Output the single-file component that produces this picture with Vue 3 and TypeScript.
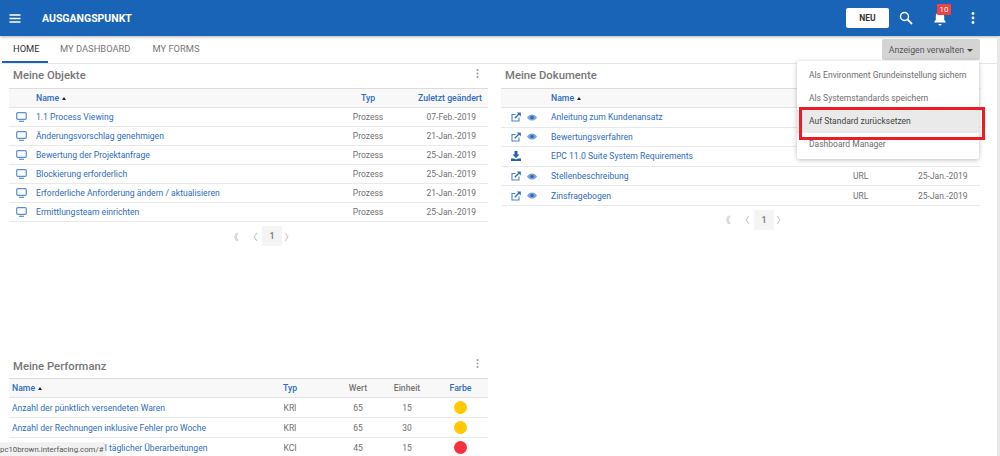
<script setup lang="ts">
const objekte = [
  ['1.1 Process Viewing', 'Prozess', '07-Feb.-2019'],
  ['Änderungsvorschlag genehmigen', 'Prozess', '21-Jan.-2019'],
  ['Bewertung der Projektanfrage', 'Prozess', '25-Jan.-2019'],
  ['Blockierung erforderlich', 'Prozess', '25-Jan.-2019'],
  ['Erforderliche Anforderung ändern / aktualisieren', 'Prozess', '21-Jan.-2019'],
  ['Ermittlungsteam einrichten', 'Prozess', '25-Jan.-2019'],
]
const dokumente = [
  { name: 'Anleitung zum Kundenansatz', typ: 'URL', date: '25-Jan.-2019', dl: false },
  { name: 'Bewertungsverfahren', typ: 'URL', date: '25-Jan.-2019', dl: false },
  { name: 'EPC 11.0 Suite System Requirements', typ: 'Datei', date: '22-Jan.-2019', dl: true },
  { name: 'Stellenbeschreibung', typ: 'URL', date: '25-Jan.-2019', dl: false },
  { name: 'Zinsfragebogen', typ: 'URL', date: '25-Jan.-2019', dl: false },
]
const perf = [
  ['Anzahl der pünktlich versendeten Waren', 'KRI', '65', '15', '#ffc800'],
  ['Anzahl der Rechnungen inklusive Fehler pro Woche', 'KRI', '65', '30', '#ffc800'],
  ['Anzahl der Projektanzahl täglicher Überarbeitungen', 'KCI', '45', '15', '#f73139'],
]
const menu = ['Als Environment Grundeinstellung sichern', 'Als Systemstandards speichern', 'Auf Standard zurücksetzen', 'Dashboard Manager']
</script>

<template>
  <div class="page">
    <header class="top">
      <svg class="burger" width="12" height="9" viewBox="0 0 12 9"><path d="M0.500 1h11M0.500 4.500h11M0.500 8h11" stroke="#fff" stroke-width="1.300" /></svg>
      <div class="brand">AUSGANGSPUNKT</div>
      <button class="neu">NEU</button>
      <svg class="search" width="14" height="14" viewBox="0 0 14 14"><circle cx="5.500" cy="5.500" r="4" fill="none" stroke="#fff" stroke-width="1.500" /><path d="M8.500 8.500l4.500 4.500" stroke="#fff" stroke-width="1.800" /></svg>
      <div class="bell">
        <svg width="14" height="16" viewBox="0 0 14 16"><path d="M7 1.200c.7 0 1.100.4 1.100 1 2 .5 3.100 2.200 3.100 4.300v3.600l1.500 1.700v.7H1.300v-.7l1.500-1.700V6.500c0-2.100 1.100-3.800 3.100-4.300 0-.6.400-1 1.100-1zM5.400 14h3.200c0 .9-.7 1.500-1.600 1.500S5.400 14.900 5.400 14z" fill="#fff" /></svg>
        <span class="badge">10</span>
      </div>
      <svg class="kebab" width="4" height="12" viewBox="0 0 4 12"><circle cx="2" cy="1.500" r="1.400" fill="#fff" /><circle cx="2" cy="6" r="1.400" fill="#fff" /><circle cx="2" cy="10.500" r="1.400" fill="#fff" /></svg>
    </header>

    <nav class="tabs">
      <a class="tab active">HOME</a>
      <a class="tab">MY DASHBOARD</a>
      <a class="tab">MY FORMS</a>
      <button class="manage">Anzeigen verwalten <i class="caret"></i></button>
    </nav>

    <main class="grid">
      <section class="panel">
        <div class="title">Meine Objekte
          <svg class="dots" width="3" height="9" viewBox="0 0 3 9"><circle cx="1.500" cy="1" r="1" /><circle cx="1.500" cy="4.500" r="1" /><circle cx="1.500" cy="8" r="1" /></svg>
        </div>
        <div class="row head obj">
          <span></span><span class="link b">Name <i class="up"></i></span><span class="c link b">Typ</span><span class="e link b">Zuletzt geändert</span>
        </div>
        <div v-for="r in objekte" :key="r[0]" class="row obj">
          <svg class="ic" width="11" height="10" viewBox="0 0 11 10"><rect x="0.700" y="0.700" width="9.600" height="6.600" rx="1" fill="none" stroke="#5b8ed0" stroke-width="1.200" /><path d="M3 9.300h5" stroke="#5b8ed0" stroke-width="1.200" /></svg>
          <span class="link">{{ r[0] }}</span><span class="c sm">{{ r[1] }}</span><span class="e2 sm">{{ r[2] }}</span>
        </div>
        <div class="pager"><span>《</span><span class="p2">〈</span><b>1</b><span>〉</span></div>
      </section>

      <section class="panel right">
        <div class="title">Meine Dokumente</div>
        <div class="row head doc">
          <span></span><span class="link b">Name <i class="up"></i></span><span class="link b">Typ</span><span class="link b pull">Zuletzt geändert</span>
        </div>
        <div v-for="d in dokumente" :key="d.name" class="row doc">
          <span class="icons">
            <svg v-if="d.dl" width="10" height="10" viewBox="0 0 10 10"><path d="M3.500 0h3v3.500h2L5 7 1.500 3.500h2zM0 7.500h3L5 8.500l2-1h3V10H0z" fill="#1f5fae" /></svg>
            <template v-else>
              <svg width="10" height="10" viewBox="0 0 10 10"><path d="M8 5.500V9H1V2.500h3.500" fill="none" stroke="#4a84cb" stroke-width="1.100" /><path d="M3.800 6.200L8 2" fill="none" stroke="#2d6bbd" stroke-width="1.300" /><path d="M5.800 0.500H9.800V4.500z" fill="#2d6bbd" /></svg>
              <svg class="eye" width="10" height="7" viewBox="0 0 10 7"><path d="M0 3.500C1.300 1.300 3 .4 5 .4s3.700.9 5 3.100C8.700 5.700 7 6.600 5 6.600S1.300 5.700 0 3.500z" fill="#7fa6d8" /><circle cx="5" cy="3.500" r="1.800" fill="#2d6bbd" /></svg>
            </template>
          </span>
          <span class="link">{{ d.name }}</span><span class="sm">{{ d.typ }}</span><span class="sm">{{ d.date }}</span>
        </div>
        <div class="pager"><span>《</span><span class="p2">〈</span><b>1</b><span>〉</span></div>
      </section>

      <section class="panel perf">
        <div class="title">Meine Performanz
          <svg class="dots" width="3" height="9" viewBox="0 0 3 9"><circle cx="1.500" cy="1" r="1" /><circle cx="1.500" cy="4.500" r="1" /><circle cx="1.500" cy="8" r="1" /></svg>
        </div>
        <div class="row head prf">
          <span class="link b">Name <i class="up"></i></span><span class="c link b">Typ</span><span class="c grey b">Wert</span><span class="c grey b">Einheit</span><span class="c link b">Farbe</span>
        </div>
        <div v-for="p in perf" :key="p[0]" class="row prf">
          <span class="link">{{ p[0] }}</span><span class="c sm">{{ p[1] }}</span><span class="c sm">{{ p[2] }}</span><span class="c sm">{{ p[3] }}</span>
          <span class="c"><i class="dot" :style="{ background: p[4] }"></i></span>
        </div>
      </section>
    </main>

    <div class="menu">
      <div v-for="(m, i) in menu" :key="m" class="item" :class="{ hot: i === 2 }">{{ m }}</div>
    </div>
    <div class="redbox"></div>
    <div class="status">pc10brown.interfacing.com/#</div>
    <div class="scroll"></div>
  </div>
</template>

<style>
html, body { margin: 0; overflow: hidden; background: #fff; }
</style>

<style scoped>
.page { position: relative; width: 1000px; height: 456px; overflow: hidden; font-family: Roboto, "Liberation Sans", sans-serif; font-size: 8.6px; color: #6f6f6f; background: #fff; }
.top { height: 36px; background: #1a64b8; display: flex; align-items: center; box-shadow: 0 1px 3px rgba(0,0,0,.3); position: relative; }
.burger { margin-left: 8.500px; }
.brand { margin-left: 21.500px; color: #fff; font-weight: 700; font-size: 10.500px; flex: 1; }
.neu { width: 43px; height: 20px; border: 0; border-radius: 2px; background: #fff; color: #333; font: 700 8.500px Roboto, sans-serif; padding: 0; margin-top: -1px; }
.search { margin-left: 10px; margin-top: -1px; }
.bell { position: relative; margin-left: 20px; height: 16px; margin-top: -1px; }
.badge { position: absolute; left: 4px; top: -6px; background: #f04343; color: #fff; font-size: 8px; line-height: 11px; width: 14px; height: 11px; text-align: center; border-radius: 1px; }
.kebab { margin: -1px 25px 0 24px; }
.tabs { height: 27px; border-bottom: 1px solid #e6e6e6; display: flex; align-items: center; padding-left: 2px; position: relative; box-sizing: content-box; font-size: 9.35px; }
.tab { height: 27px; line-height: 26px; box-sizing: border-box; color: #777; white-space: nowrap; }
.tab:nth-child(2) { margin-left: 12px; }
.tab:nth-child(3) { margin-left: 22px; }
.tab.active { color: #333; border-bottom: 2px solid #1a64b8; width: 46px; padding-left: 11px; }
.manage { position: absolute; left: 882px; top: 3px; width: 98px; height: 21px; border: 0; background: #d4d4d4; border-radius: 2px; color: #555; font: 8.700px Roboto, sans-serif; padding: 0; }
.caret { display: inline-block; border: 3px solid transparent; border-top: 3.500px solid #444; border-bottom: 0; vertical-align: 1px; margin-left: 1px; }
.grid { display: grid; grid-template-columns: 479px 479px; column-gap: 13px; padding: 0 0 0 9px; grid-template-rows: 289px auto; }
.panel { min-width: 0; }
.title { height: 24px; font-size: 11.300px; font-weight: 500; color: #777; line-height: 24px; padding-left: 4px; position: relative; box-sizing: border-box; }
.dots { position: absolute; right: 9px; top: 5px; fill: #999; }
.row { display: grid; align-items: center; height: 19px; border-bottom: 1px solid #e9e9e9; box-sizing: border-box; white-space: nowrap; }
.head { height: 20px; background: #f8f8f8; border-top: 1px solid #dcdcdc; border-bottom: 1px solid #e4e4e4; }
.obj { grid-template-columns: 27px 302px 60px 90px; }
.doc { grid-template-columns: 50px 302px 65px 62px; height: 19.600px; }
.doc.head { height: 20px; }
.pull { margin-left: -8px; }
.prf { grid-template-columns: 233px 90px 46px 52px 55px; padding-left: 3px; height: 20px; }
.perf { padding-top: 1px; }
.perf .title { line-height: 26px; }
.c { text-align: center; }
.e { text-align: right; padding-right: 6px; }
.e2 { text-align: right; padding-right: 12px; }
.sm { font-size: 8.500px; }
.ic { margin-left: 7px; }
.link { color: #2e6cbc; }
.b { font-weight: 500; font-size: 8.700px; }
.grey { color: #777; }
.up { display: inline-block; border: 2.500px solid transparent; border-bottom: 3px solid #222; border-top: 0; vertical-align: 1px; margin-left: 1px; }
.icons { display: flex; align-items: center; gap: 6px; padding-left: 10px; }
.pager { display: flex; align-items: center; height: 20px; margin-top: 4px; padding-left: 219px; color: #aaa; font-size: 9px; }
.pager span { font-family: "Noto Sans CJK SC", sans-serif; width: 12px; text-align: center; }
.pager .p2 { margin: 0 3px 0 7px; }
.pager b { width: 20px; height: 20px; line-height: 20px; text-align: center; background: #f4f4f4; font-weight: 500; color: #777; margin-right: 1px; }
.dot { display: block; width: 13px; height: 13px; border-radius: 50%; margin: 0 auto; }
.menu { position: absolute; left: 797px; top: 61px; width: 182px; height: 98px; background: #fff; box-shadow: 0 1px 5px rgba(0,0,0,.25); border-radius: 2px; padding: 3px 0 0; box-sizing: border-box; }
.item { height: 23px; line-height: 23px; padding-left: 12px; color: #6e6e6e; font-size: 8.500px; white-space: nowrap; }
.item.hot { background: #eaeaea; color: #444; }
.redbox { position: absolute; left: 799px; top: 107px; width: 186px; height: 33px; border: 3px solid #ed1c24; box-sizing: border-box; }
.status { position: absolute; left: 0; top: 443px; height: 13px; line-height: 13px; width: 105px; background: #f1f1f1; border-top-right-radius: 3px; box-shadow: 0 0 1px rgba(0,0,0,.4); color: #555; font-size: 7.800px; white-space: nowrap; overflow: hidden; }
.scroll { position: absolute; right: 0; top: 37px; bottom: 0; width: 3px; background: #e8e8e8; }
</style>
